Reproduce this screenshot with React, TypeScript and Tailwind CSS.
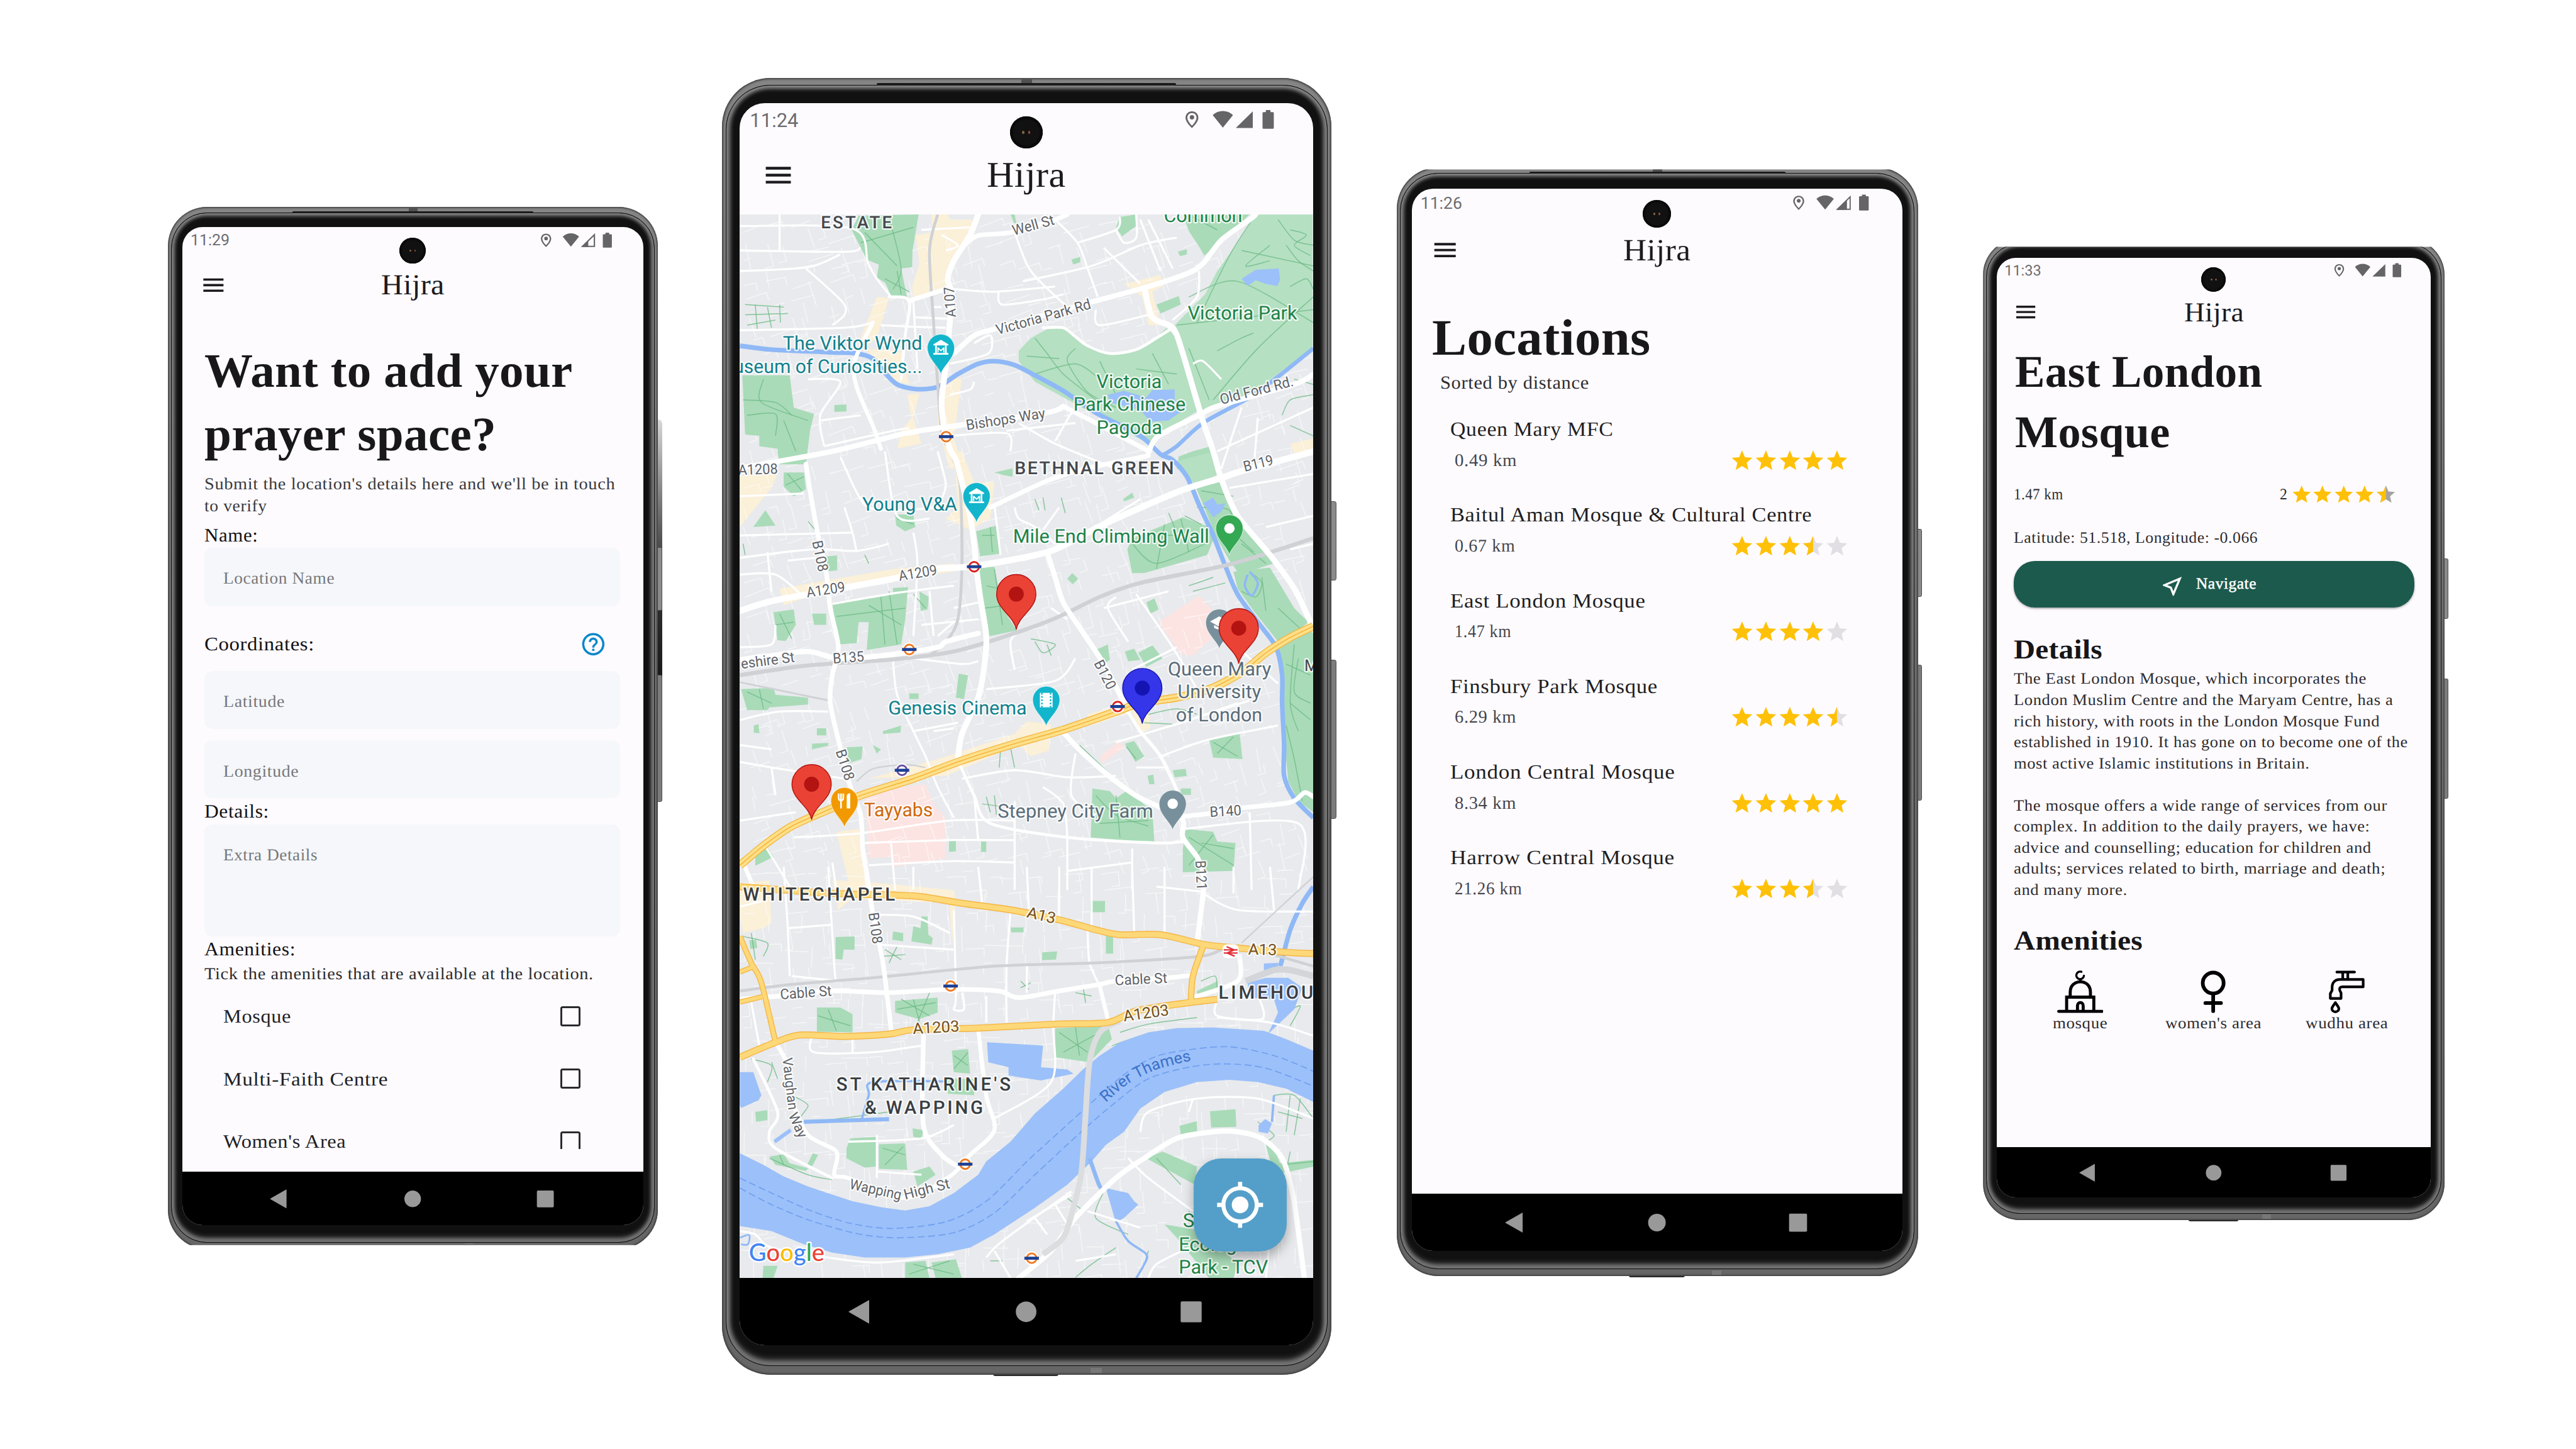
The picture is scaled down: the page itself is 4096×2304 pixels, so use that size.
import React from "react";
import { MdMenu, MdHelpOutline, MdMyLocation, MdOutlineNearMe } from "react-icons/md";

/* ---------- fitted serif text ---------- */

const ctx = document.createElement("canvas").getContext("2d")!;

function naturalWidth(text: string, size: number, bold: boolean) {
  ctx.font = `${bold ? "bold " : ""}1000px "Liberation Serif"`;
  return (ctx.measureText(text).width * size) / 1000;
}

/** A line of serif text whose letter width and tracking are computed so that it spans `w` pixels. */
function T({ children, s, w, bold = false, className = "" }: { children: string; s: number; w: number; bold?: boolean; className?: string }) {
  const gaps = Math.max(1, children.length - 1);
  const natural = naturalWidth(children, s, bold);
  const stretch = Math.min(1.16, Math.max(0.92, (w - (s > 20 ? 0.2 : 0.35) * gaps) / natural));
  const spacing = (w / stretch - natural) / gaps;
  return (
    <span
      className={`block origin-left whitespace-nowrap ${bold ? "font-bold" : ""} ${className}`}
      style={{ fontSize: s, letterSpacing: `${spacing.toFixed(3)}px`, width: w, transform: `scaleX(${stretch.toFixed(4)})` }}
    >
      {children}
    </span>
  );
}

/* ---------- phone shell ---------- */

type Signal = "full" | "most" | "low";

function StatusIcons({ signal }: { signal: Signal }) {
  return (
    <svg viewBox="318 0 70 24" className="h-[24px] w-[70px]" fill="#656568">
      <path fillRule="evenodd" d="M324.9 5.9c-2.7 0-4.6 2-4.6 4.6 0 3.3 4.6 7.4 4.6 7.4s4.6-4.1 4.6-7.4c0-2.6-1.9-4.6-4.6-4.6Zm0 1.2c1.9 0 3.3 1.4 3.3 3.3 0 2-2 4.5-3.3 5.8-1.3-1.3-3.3-3.8-3.3-5.8 0-1.9 1.4-3.3 3.3-3.3Z" />
      <circle cx="324.9" cy="10.2" r="1.6" />
      <path d="M347.1 17.6 339.8 8.6c4-3.9 10.6-3.9 14.6 0Z" />
      {signal === "full" && <path d="M356.4 17.8 368.6 5.9v11.9Z" />}
      {signal === "most" && (
        <>
          <path d="M357.4 17.3 368.1 6.9v10.4Z" fill="none" stroke="#656568" strokeWidth="1" />
          <path d="M357 17.8 365.4 9.4v8.4Z" />
        </>
      )}
      {signal === "low" && (
        <>
          <path d="M357.4 17.3 368.1 6.9v10.4Z" fill="none" stroke="#656568" strokeWidth="1.2" />
          <path d="M357 17.8 362.6 12v5.8Z" />
        </>
      )}
      <path d="M375.6 7.1q0-.7.7-.7h1.7V5h3.3v1.4h1.7q.7 0 .7.7v10.6q0 .7-.7.7h-6.7q-.7 0-.7-.7Z" />
    </svg>
  );
}

function Phone({ time, signal, children, worn = false }: { time: string; signal: Signal; children: React.ReactNode; worn?: boolean }) {
  return (
    <div className="relative w-[438px]">
      {worn && <div className="absolute top-[190px] left-[436px] h-[260px] w-[5.5px] rounded-r-[4px] bg-gradient-to-b from-[#d8d8d8] via-[#3b3b3b] to-[#111]" />}
      <div className="absolute top-[304px] left-[436px] h-[57px] w-[5.5px] rounded-r-[1.5px] border-[0.7px] border-[#4b4b4b] bg-[#8b8b8b]" />
      <div className="absolute top-[418px] left-[436px] h-[114px] w-[5.5px] rounded-r-[1.5px] border-[0.7px] border-[#4b4b4b] bg-[#7c7c7c]" />
      <div className="absolute bottom-[-1px] left-[195px] h-[3px] w-[47px] rounded-full bg-[#2b2b2b]" />
      <div className="relative rounded-[35px] bg-gradient-to-b from-[#858585] via-[#6a6a6a] to-[#666] px-[3px] pt-[5px] pb-[6px] shadow-[inset_0_0_1.4px_0.8px_#3a3a3a]">
        <div className="absolute top-[1px] left-[215px] h-[5px] w-[8px] bg-[#505050]" />
        <div className="absolute bottom-[1px] left-[265px] h-[4px] w-[8px] bg-[#777]" />
        <div className="relative rounded-[32px] border-[0.8px] border-[#0c0c0c] bg-[#111] px-[9.2px] pt-[12.7px] pb-[14.7px] shadow-[inset_0_-2.5px_5px_1px_#6f6f6f,inset_0_0_3.5px_1.8px_#a8a8a8]">
          <div className="absolute top-[-1.6px] left-[108px] h-[1.6px] w-[215px] rounded-full bg-[#1b1b1b]" />
          <div className="relative flex h-[892px] w-[412px] flex-col overflow-hidden rounded-[18px] bg-[#fefbff]">
            <div className="absolute top-[9.3px] left-[194.3px] flex h-[23.4px] w-[23.4px] items-center justify-center gap-[2.6px] rounded-full bg-[#111112] shadow-[inset_0_0_0_2px_#0a0a0a]">
              <div className="h-[2px] w-[1.6px] rounded-full bg-[#7c6a3d]" />
              <div className="h-[2px] w-[1.6px] rounded-full bg-[#94483a]" />
            </div>
            <div className="flex h-[24px] shrink-0 items-start justify-between pr-[24px] pl-[7.5px]">
              <span className="pt-[4.5px] font-['Roboto'] text-[14px] leading-[16px] text-[#6c6c70]">{time}</span>
              <StatusIcons signal={signal} />
            </div>
            <div className="grid h-[56px] shrink-0 grid-cols-[1fr_56.5px_1fr] items-center">
              <MdMenu className="mt-[-1px] ml-[16px] size-[24px] text-[#1b1b1f]" />
              <T s={26} w={56.5} className="leading-[30px] text-[#1b1b1f]">Hijra</T>
            </div>
            <div className="h-[764px] shrink-0">{children}</div>
            <div className="h-[48px] shrink-0 bg-black">
              <svg viewBox="0 0 412 48" className="h-[48px] w-[412px]" fill="#999">
                <path d="M78.6 24.3 92.8 16.2v16.2Z" stroke="#999" strokeWidth=".5" strokeLinejoin="round" />
                <circle cx="205.8" cy="24.3" r="7.4" />
                <rect x="316.8" y="16.8" width="15.1" height="15.1" rx="1" />
              </svg>
            </div>
          </div>
        </div>
      </div>
    </div>
  );
}

/* ---------- stars ---------- */

const STAR = "M12 17.27 18.18 21l-1.64-7.03L22 9.24l-7.19-.61L12 2 9.19 8.63 2 9.24l5.46 4.73L5.82 21z";

function Stars({ value, empty = "#e2dfe4" }: { value: number; empty?: string }) {
  return (
    <div className="flex">
      {[0, 1, 2, 3, 4].map((i) => (
        <svg key={i} viewBox="0.4 1.2 23.2 23.2" className="size-[20px] overflow-visible">
          <path d={STAR} fill={value >= i + 1 ? "#ffc107" : empty} transform="translate(0 .5)" />
          {value > i && value < i + 1 && (
            <path d="M12 17.27 5.82 21l1.64-7.03L2 9.24l7.19-.61L12 2z" fill="#ffc107" transform="translate(0 .5)" />
          )}
        </svg>
      ))}
    </div>
  );
}

/* ---------- screen: add a prayer space ---------- */

function Field({ label, w, className }: { label: string; w: number; className: string }) {
  return (
    <div className={`w-[371.5px] rounded-[7px] bg-[#f5f7fa] pt-[17.6px] pl-[16.8px] ${className}`}>
      <T s={15} w={w} className="leading-[20px] text-[#77777a]">{label}</T>
    </div>
  );
}

function AddSpace() {
  return (
    <div className="flex flex-col pl-[19.7px] text-[#121214]">
      <T s={43} w={329} bold className="mt-[19.7px] leading-[57px] text-[#18181a]">Want to add your</T>
      <T s={43} w={261.5} bold className="leading-[57px] text-[#18181a]">prayer space?</T>
      <T s={15} w={367} className="mt-[5.7px] leading-[20px] text-[#3a3a3e]">Submit the location's details here and we'll be in touch</T>
      <T s={15} w={55.7} className="leading-[20px] text-[#3a3a3e]">to verify</T>
      <T s={17} w={47.7} className="mt-[6px] leading-[20px]">Name:</T>
      <Field label="Location Name" w={99.3} className="mt-[1.1px] h-[52.2px]" />
      <div className="mt-[22.2px] flex h-[24px] w-[359.5px] items-center justify-between">
        <T s={17} w={98} className="leading-[24px]">Coordinates:</T>
        <MdHelpOutline className="size-[24px] text-[#0b87c9]" />
      </div>
      <Field label="Latitude" w={54.8} className="mt-[11.6px] h-[52px]" />
      <Field label="Longitude" w={67.3} className="mt-[10.2px] h-[51.7px]" />
      <T s={17} w={57.5} className="mt-[1.9px] leading-[20px]">Details:</T>
      <Field label="Extra Details" w={84.1} className="mt-[1.3px] h-[100.3px]" />
      <T s={17} w={81.2} className="mt-[1.7px] leading-[20px]">Amenities:</T>
      <T s={15} w={347.6} className="mt-[1.6px] h-[19.8px] leading-[20px] text-[#2b2b2e]">Tick the amenities that are available at the location.</T>
      <div className="h-[146.6px] overflow-hidden">
        {[
          { name: "Mosque", w: 60.4 },
          { name: "Multi-Faith Centre", w: 147 },
          { name: "Women's Area", w: 110.5 },
        ].map((a) => (
          <div key={a.name} className="flex h-[56px] w-[336.5px] items-center justify-between pl-[16.8px]">
            <T s={17} w={a.w} className="pt-[1px] leading-[24px] text-[#222226]">{a.name}</T>
            <div className="size-[18px] rounded-[2px] border-[1.7px] border-[#2a2a2e]" />
          </div>
        ))}
      </div>
    </div>
  );
}

/* ---------- screen: locations ---------- */

const LOCATIONS = [
  { name: "Queen Mary MFC", w: 136.7, km: "0.49 km", kw: 52.1, stars: 5 },
  { name: "Baitul Aman Mosque & Cultural Centre", w: 304.6, km: "0.67 km", kw: 50.6, stars: 3.5 },
  { name: "East London Mosque", w: 163.8, km: "1.47 km", kw: 47.4, stars: 4 },
  { name: "Finsbury Park Mosque", w: 174, km: "6.29 km", kw: 51.5, stars: 4.5 },
  { name: "London Central Mosque", w: 188.5, km: "8.34 km", kw: 51.5, stars: 5 },
  { name: "Harrow Central Mosque", w: 188.2, km: "21.26 km", kw: 56.4, stars: 3.5 },
];

function Locations() {
  return (
    <div className="flex flex-col">
      <T s={43} w={183.4} bold className="mt-[16.5px] ml-[17px] leading-[57px] text-[#18181a]">Locations</T>
      <T s={15.5} w={124.8} className="mt-[0.2px] ml-[24px] leading-[20px] text-[#2e2e31]">Sorted by distance</T>
      <div className="mt-[16.3px] flex flex-col gap-[23.7px] pl-[32.4px]">
        {LOCATIONS.map((l) => (
          <div key={l.name} className="flex h-[48.3px] flex-col justify-between">
            <T s={17} w={l.w} className="leading-[24px] text-[#1f1f23]">{l.name}</T>
            <div className="flex w-[335px] items-center justify-between pl-[3.6px]">
              <T s={15} w={l.kw} className="leading-[20px] text-[#45454a]">{l.km}</T>
              <Stars value={l.stars} />
            </div>
          </div>
        ))}
      </div>
    </div>
  );
}

/* ---------- screen: mosque details ---------- */

const PARAGRAPHS: { t: string; w: number }[][] = [
  [
    { t: "The East London Mosque, which incorporates the", w: 334.5 },
    { t: "London Muslim Centre and the Maryam Centre, has a", w: 359.8 },
    { t: "rich history, with roots in the London Mosque Fund", w: 347.2 },
    { t: "established in 1910. It has gone on to become one of the", w: 373.9 },
    { t: "most active Islamic institutions in Britain.", w: 280.5 },
  ],
  [
    { t: "The mosque offers a wide range of services from our", w: 354.2 },
    { t: "complex. In addition to the daily prayers, we have:", w: 337.8 },
    { t: "advice and counselling; education for children and", w: 339.2 },
    { t: "adults; services related to birth, marriage and death;", w: 352.7 },
    { t: "and many more.", w: 107.5 },
  ],
];

function MosqueIcon() {
  return (
    <svg viewBox="0 0 44 40.5" className="h-[40.5px] w-[44px]" fill="none" stroke="#000" strokeWidth="2.9" strokeLinecap="round">
      <path d="M1.5 38.9H42.5" />
      <path d="M9 38V25.4H34.8V38" strokeLinecap="butt" />
      <path d="M12.4 25V20.6C12.4 14.6 16.5 10.8 22 10.8s9.6 3.8 9.6 9.8V25" strokeLinecap="butt" />
      <path d="M19.3 38v-4.3c0-4.2 5.4-4.2 5.4 0V38" />
      <path d="M22 10V9" strokeWidth="2.4" />
      <path d="M23 1.3A3.6 3.6 0 1 0 25.4 5" strokeWidth="2" />
    </svg>
  );
}

function WomenIcon() {
  return (
    <svg viewBox="0 0 24 40.5" className="h-[40.5px] w-[24px]" fill="none" stroke="#000" strokeWidth="3.5" strokeLinecap="round">
      <circle cx="12" cy="12" r="9.9" />
      <path d="M12 22V38.6M4.6 31H19.4" />
    </svg>
  );
}

function FaucetIcon() {
  return (
    <svg viewBox="0 0 34 40.5" className="h-[40.5px] w-[34px]" fill="none" stroke="#000" strokeWidth="2.5" strokeLinejoin="round" strokeLinecap="round">
      <path d="M7.6 1.6H24.4M13.2 1.6v6.5M18 1.6v6.5" />
      <path d="M32.6 8.6H10.8C5.4 8.6 3 11.8 3.1 16.5v2.5L1.4 22v4.6H11.6v-5.2l-1.2-2.4c-.6-2 .2-3.4 2.2-3.4h20Z" />
      <path d="M6.2 30.6c-1.8 2.6-3.3 4.2-3.3 5.6a3.3 3.1 0 0 0 6.6 0c0-1.4-1.5-3-3.3-5.6Z" />
    </svg>
  );
}

function MosqueDetails() {
  return (
    <div className="flex flex-col pl-[16.2px] text-[#2c2c2f]">
      <T s={43} w={234.7} bold className="mt-[-0.6px] ml-[1.4px] leading-[57.5px] text-[#18181a]">East London</T>
      <T s={43} w={147} bold className="ml-[1.4px] leading-[57.5px] text-[#18181a]">Mosque</T>
      <div className="mt-[20.8px] flex h-[20px] w-[363px] items-center justify-between">
        <T s={15} w={46.7} className="leading-[20px]">1.47 km</T>
        <div className="flex items-center gap-[3px]">
          <T s={15} w={7.4} className="leading-[20px]">2</T>
          <Stars value={4.5} empty="#a3a3a3" />
        </div>
      </div>
      <T s={15} w={231.4} className="mt-[21.2px] leading-[20px]">Latitude: 51.518, Longitude: -0.066</T>
      <div className="mt-[11.6px] flex h-[44.2px] w-[380px] items-center rounded-[20px] bg-[#1c5a4d] pl-[138.5px] shadow-[0_1px_2px_rgba(0,0,0,0.35)]">
        <MdOutlineNearMe className="mt-[3px] size-[24px] text-white" />
        <T s={15} w={57} className="ml-[10.5px] leading-[20px] text-white [-webkit-text-stroke:0.3px_white]">Navigate</T>
      </div>
      <T s={26} w={84} bold className="mt-[26.2px] leading-[28px] text-[#161618]">Details</T>
      <div className="mt-[3.8px] flex flex-col gap-[20px]">
        {PARAGRAPHS.map((p, i) => (
          <div key={i}>
            {p.map((l) => (
              <T key={l.t} s={15} w={l.w} className="leading-[20.04px]">{l.t}</T>
            ))}
          </div>
        ))}
      </div>
      <T s={26} w={122.2} bold className="mt-[24.1px] leading-[28px] text-[#161618]">Amenities</T>
      <div className="mt-[13.6px] grid w-[380px] grid-cols-[126px_127px_126px]">
        <div className="flex flex-col items-center">
          <MosqueIcon />
          <T s={15} w={51.7} className="leading-[20px]">mosque</T>
        </div>
        <div className="flex flex-col items-center">
          <WomenIcon />
          <T s={15} w={91} className="leading-[20px]">women's area</T>
        </div>
        <div className="flex flex-col items-center">
          <FaucetIcon />
          <T s={15} w={78.1} className="leading-[20px]">wudhu area</T>
        </div>
      </div>
    </div>
  );
}

/* ---------- screen: map ---------- */

type Pt = [number, number];
const KX = 0.70153;

const sheet = (ky: number, y0: number) => (s: string): Pt[] =>
  s.trim().split(/\s+/).map((p) => {
    const [x, y] = p.split(",").map(Number);
    return [1230 + x * KX, y0 + y * ky] as Pt;
  });
const N = sheet(0.44643, 110);
const M = sheet(0.48469, 780);
const S = sheet(0.57398, 1500);

const poly = (p: Pt[]) => "M" + p.map(([x, y]) => `${x.toFixed(1)} ${y.toFixed(1)}`).join("L") + "Z";

function line(p: Pt[]) {
  let d = `M${p[0][0].toFixed(1)} ${p[0][1].toFixed(1)}`;
  for (let i = 0; i < p.length - 1; i++) {
    const a = p[i - 1] ?? p[i];
    const b = p[i];
    const c = p[i + 1];
    const e = p[i + 2] ?? c;
    const k = 7;
    d += `C${(b[0] + (c[0] - a[0]) / k).toFixed(1)} ${(b[1] + (c[1] - a[1]) / k).toFixed(1)} ${(c[0] - (e[0] - b[0]) / k).toFixed(1)} ${(c[1] - (e[1] - b[1]) / k).toFixed(1)} ${c[0].toFixed(1)} ${c[1].toFixed(1)}`;
  }
  return d;
}

const bundle = (n: string[], m: string[], s: string[]) => [...n.map(N), ...m.map(M), ...s.map(S)];

const PARKS = bundle(
  [
    "348,640 365,585 513,580 498,720 497,785 470,790 485,905 445,895 430,845 410,825 415,775 385,755",
    "1165,580 1330,580 1290,640 1218,740 1205,705 1180,645",
    "1010,590 1050,580 1050,625 1015,665 1000,630",
    "78,1205 195,1205 205,1330 255,1355 245,1420 235,1550 170,1550 165,1490 120,1480 120,1440 85,1435",
    "1190,1500 1235,1480 1245,1568 1150,1568 1155,1520",
    "305,1320 335,1318 335,1345 305,1347",
    "890,755 912,745 912,765 895,775",
    "1153,725 1175,715 1175,735 1158,742",
    "1100,930 1155,897 1160,930 1110,965",
    "740,580 750,580 755,618 748,612",
  ],
  [
    "165,0 232,0 222,30 170,45", "180,75 230,75 235,135 205,160 180,125", "135,210 160,265 105,270",
    "455,225 500,225 505,270 480,285 458,265", "655,285 705,265 715,365 665,375", "662,415 700,412 720,560 755,640 683,662",
    "300,545 450,510 450,488 487,485 480,600 470,690 385,710 390,610 365,610 360,685 315,690",
    "155,575 205,565 210,620 185,678 165,675", "250,580 285,580 285,620 255,620", "515,500 538,520 535,565 518,570",
    "285,375 312,372 312,425 290,428", "700,75 745,60 745,90 725,85", "1018,170 1040,147 1045,165 1020,178",
    "1195,120 1260,98 1300,250 1385,380 1390,400 1305,440 1280,390 1245,300 1215,190",
    "1290,430 1380,415 1440,560 1475,610 1440,650 1400,680 1340,570 1300,490",
    "1395,690 1440,650 1475,640 1487,650 1487,1290 1450,1250 1425,1180 1420,1100 1415,900 1410,760",
    "1040,310 1165,235 1250,280 1225,370 1070,435 1040,435 1028,350", "880,455 892,435 907,455 893,475",
    "1075,540 1095,525 1105,565 1085,580", "950,710 980,690 985,745 965,765", "1055,720 1090,693 1115,740 1075,770",
    "1022,715 1045,705 1060,745 1030,750", "75,850 155,845 160,870 240,880 240,905 145,915 140,925 90,925",
    "490,865 513,865 513,885 490,885", "425,1000 470,980 468,1005 425,1010", "400,1050 420,1065 410,1080",
    "335,1058 375,1055 372,1100 340,1115", "612,795 635,800 625,885 605,880", "1230,1030 1305,1005 1312,1100 1240,1095",
    "1140,1140 1172,1135 1175,1160 1145,1165", "1022,1045 1045,1035 1070,1090 1048,1110", "1078,1160 1092,1155 1095,1190 1082,1190",
    "262,990 285,990 285,1015 262,1015", "250,1045 290,1042 290,1052 250,1065", "106,980 118,975 120,1008 106,1005",
    "942,1205 985,1215 1000,1240 1030,1210 1090,1290 1095,1400 980,1385 938,1380",
    "1170,1350 1240,1360 1250,1395 1295,1400 1290,1500 1165,1505 1165,1420 1170,1380", "1160,1205 1185,1205 1185,1228 1160,1228",
    "588,1390 605,1390 605,1430 588,1432", "667,1395 680,1395 680,1432 667,1432", "110,1440 140,1415 155,1450 110,1482",
  ],
  [
    "1180,0 1290,0 1290,10 1165,15", "520,150 535,150 537,205 548,215 545,235 495,225 500,180 518,185", "450,195 475,200 475,225 448,220",
    "308,212 355,210 355,250 328,250 325,280 308,278", "818,258 855,255 852,280 818,282", "740,183 772,183 772,198 742,198",
    "975,207 993,207 993,262 975,262", "937,103 973,103 973,137 937,137", "262,425 320,425 350,445 350,500 262,498",
    "455,405 560,395 560,440 515,460 455,440", "850,488 945,480 980,475 990,520 935,590 850,575", "595,555 635,550 640,625 600,620",
    "585,640 650,640 650,690 585,685", "335,850 345,820 412,815 410,905 380,908 335,880", "415,838 480,835 485,915 415,912",
    "498,790 525,795 520,820 500,815", "500,920 540,905 555,930 510,965", "238,900 252,865 265,870 250,905",
    "1232,738 1295,732 1297,785 1235,787", "1157,782 1200,768 1200,800 1160,808", "1075,880 1115,860 1200,905 1195,960",
    "130,1205 165,1205 155,1242 128,1242", "480,1195 530,1190 540,1242 480,1242", "545,1195 605,1185 620,1242 555,1242",
    "1370,840 1390,850 1405,895 1487,885 1487,905 1390,930", "1120,1080 1220,1100 1300,1200 1290,1242 1230,1242 1150,1120",
    "145,875 180,868 195,895 240,910 235,918 160,900", "1200,375 1250,345 1250,375 1200,390", "110,740 140,735 140,765 112,770", "95,222 112,220 115,245 98,248",
  ],
);

const VICTORIA = bundle(
  [
    "1345,580 1485,580 1485,1100 1330,1280 1215,1345 1160,1060 1145,1010 1220,890 1250,800 1300,690",
    "760,1110 790,1060 830,1025 870,1022 900,1060 930,1085 985,1120 1050,1110 1090,1070 1125,1020 1150,1060 1205,1340 1100,1440 1080,1470 870,1290 800,1230 760,1150",
  ],
  ["1150,35 1240,0 1255,80 1195,120"],
  [],
);

const COMMERCE = bundle(
  [
    "505,660 545,650 545,580 585,580 590,600 650,600 645,660 600,760 590,830 575,880 500,905 497,860 515,770",
    "410,900 440,905 410,1060 375,1100 370,1060 395,960",
    "380,1100 470,1110 490,1240 440,1220 400,1130",
    "560,1225 620,1215 600,1450 625,1568 590,1568 560,1400",
    "485,1280 515,1275 500,1370 520,1470 460,1490 470,1420 495,1370",
    "1020,850 1110,815 1115,860 1090,880 1110,1010 1080,1010 1065,900",
    "1430,1470 1487,1450 1487,1500 1440,1510",
  ],
  [
    "72,85 165,80 150,130 72,270", "600,0 620,0 650,110 700,110 690,240 640,280 580,240 610,200",
    "170,490 450,420 600,400 600,430 300,490 180,550", "390,1170 560,1100 750,1010 780,965 840,975 835,1070 790,1090 760,1050 580,1160",
    "310,1360 365,1350 390,1568 345,1568", "930,940 1080,880 1085,990 1060,1010 1040,930 940,980",
  ],
  ["72,50 145,40 150,170 130,185 80,200 72,150", "300,40 380,45 600,70 605,100 595,240 590,110 350,95 315,130"],
);

const HOSPITAL = bundle(
  [],
  [
    "1105,610 1205,515 1265,610 1250,650 1190,730 1160,725",
    "380,1215 530,1190 550,1260 580,1310 580,1455 450,1485 450,1450 390,1455",
    "1010,1035 1020,1060 965,1115 960,1090",
  ],
  [],
);

const WATER = bundle(
  [
    "980,1280 1020,1265 1075,1290 1090,1262 1145,1260 1145,1300 1175,1330 1130,1380 1085,1385 1060,1340 985,1310",
    "1310,830 1345,795 1402,790 1405,835 1398,858 1370,850 1345,835 1325,858",
  ],
  ["1215,185 1240,165 1250,190 1270,185 1260,215 1240,235"],
  [
    "72,865 130,900 180,935 240,965 300,990 350,1010 420,1028 480,1038 540,1025 600,985 660,930 680,890 740,830 800,745 870,670 920,610 960,570 1010,530 1080,500 1150,487 1240,485 1300,490 1365,495 1420,520 1487,555 1487,710 1420,670 1350,650 1280,643 1200,650 1120,680 1060,730 1020,800 975,840 940,890 880,960 800,1030 700,1110 640,1150 560,1170 480,1180 380,1180 300,1165 230,1140 150,1100 72,1085",
    "72,620 105,620 125,690 118,705 75,728 72,720",
    "682,530 820,540 815,605 880,612 895,625 815,645 760,635 735,630 735,605 685,590",
    "155,825 195,790 200,800 160,835",
    "975,970 1030,985 1045,1010 1055,1020 1020,1060 1000,1075",
    "1325,350 1370,335 1425,335 1460,365 1440,430 1375,505 1400,440 1390,400 1330,395",
    "1365,292 1400,290 1400,312 1365,315", "1352,780 1368,762 1385,775 1375,805 1352,800",
  ],
);

const CANALS: { p: Pt[]; w: number }[] = [
  {
    p: [
      ...N("72,1090 150,1105 290,1115 360,1120 400,1140 430,1195 460,1240 505,1258 560,1250 610,1200 660,1160 700,1150 750,1165 800,1205 870,1265 950,1350 1060,1440"),
      ...M("1110,10 1140,30 1175,90 1205,190 1240,300 1270,410 1300,510 1350,610 1395,700 1410,800 1410,900 1415,1050 1415,1160 1440,1240 1487,1310"),
    ],
    w: 8,
  },
  { p: N("1487,1100 1400,1210 1330,1290 1215,1390 1150,1480 1110,1520"), w: 7 },
  { p: M("1330,430 1350,470 1335,515 1318,480 1325,440"), w: 4 },
  { p: S("1487,60 1460,110 1430,190 1410,280 1405,300"), w: 8 },
  { p: S("230,770 440,762"), w: 7 },
  { p: S("372,765 390,690 400,650 580,648"), w: 4 },
  { p: S("935,880 960,965 975,975"), w: 7 },
  { p: S("1000,1070 1030,1130 1075,1170 1070,1200 1050,1242"), w: 4 },
  { p: S("1390,690 1385,770"), w: 4 },
  { p: S("72,1120 95,1112 92,1140 75,1140"), w: 3 },
];

const RAIL: { p: Pt[]; w: number }[] = [
  { p: M("72,800 240,765 440,745 600,715 750,650 860,590 960,520 1060,470 1290,400 1487,310"), w: 7 },
  { p: [...N("560,580 540,720 550,1000 565,1350 572,1450"), ...M("592,0 615,120 620,400 610,600 580,680 540,730")], w: 5 },
  { p: S("72,375 200,355 400,335 700,300 950,290 1210,270 1300,240 1487,300"), w: 5 },
  { p: S("1310,230 1487,30"), w: 2.5 },
  { p: M("72,825 290,890"), w: 3 },
  { p: M("360,1180 400,1135 480,1120 530,1130"), w: 2.5 },
];

const MAJOR: { p: Pt[]; w: number }[] = [
  {
    p: [
      ...N("660,580 640,660 600,760 585,830 595,890 590,1000 580,1170 570,1300 575,1400 590,1490"),
      ...M("605,30 620,110 640,230 650,330 655,410 665,520 680,660 675,770 660,880 620,1010 610,1100"),
    ],
    w: 10,
  },
  { p: N("625,700 660,662 740,650 850,600 880,580"), w: 8 },
  { p: N("600,1120 650,1050 700,1025 940,920 1070,865 1175,810 1215,770 1260,680 1330,600 1345,580"), w: 9 },
  { p: [...N("1070,865 1090,980 1140,1020 1165,1120 1210,1360 1240,1500"), ...M("1260,98 1300,230 1380,370 1440,490 1480,610")], w: 10 },
  { p: N("820,1020 870,1020 900,1055 930,1090 985,1120 1050,1105 1100,1060 1140,1020"), w: 5 },
  { p: N("1487,1200 1440,1240 1250,1325 1205,1360 1105,1440 1080,1505"), w: 9 },
  { p: N("870,1325 950,1390 1075,1495"), w: 8 },
  { p: N("72,1565 300,1500 480,1430 560,1410 630,1395 830,1350 870,1325"), w: 9 },
  { p: N("490,915 580,870"), w: 8 },
  { p: N("440,900 490,915 480,1050 470,1220"), w: 5 },
  { p: N("400,1000 355,1150 360,1250 400,1400 420,1490"), w: 7 },
  { p: M("690,200 830,105 930,60 1080,15"), w: 8 },
  { p: M("72,570 150,535 300,495 450,455 550,420 650,410 830,360 930,290 1000,240 1160,140 1260,95 1310,70 1487,0"), w: 11 },
  { p: [...M("235,45 245,140 265,300 285,430 295,560 315,700 300,800 295,900 320,1060 345,1200 370,1300 375,1420"), ...S("385,20 400,140 425,290 445,490")], w: 8 },
  { p: M("830,360 850,450 870,540 920,650 970,760 1010,870 1030,930"), w: 9 },
  { p: M("1030,930 1060,1000 1110,1090 1150,1210"), w: 6 },
  { p: M("72,745 150,730 240,715 320,740 450,725 560,700 580,680 660,650"), w: 9 },
  { p: [...M("870,1005 920,1080 1000,1180 1060,1240 1160,1310 1165,1380 1200,1450"), ...S("1215,20 1215,80 1200,230")], w: 9 },
  { p: M("1165,1305 1230,1295 1310,1275 1430,1255 1465,1220 1487,1235"), w: 8 },
  { p: M("615,1120 650,1230 690,1330 880,1380 1100,1400 1165,1395"), w: 5 },
  { p: S("72,400 170,390 300,375 440,380 590,370 710,375 760,395 860,375 960,355 1000,345 1130,335 1180,328"), w: 8 },
  { p: S("165,540 190,600 200,700 240,810 310,860 305,930 340,940 480,1000 590,935 640,870 700,795 680,690 660,490"), w: 7 },
  { p: S("525,510 525,780 570,870 610,905"), w: 8 },
  { p: S("105,580 165,740 145,800 160,850 300,940"), w: 5 },
  { p: S("760,1242 840,1160 900,1060 1000,940 1070,880 1150,820 1240,800 1300,800 1360,820 1410,880 1435,980 1450,1100 1465,1242"), w: 9 },
  { p: S("960,360 980,460"), w: 7 },
  { p: S("1305,270 1300,345 1190,395"), w: 8 },
  { p: [...M("80,1470 110,1568"), ...S("125,70")], w: 7 },
];

const MINOR = bundle(
  [
    "72,625 350,635 388,770 410,830 445,900", "72,720 330,725 370,710", "72,800 240,785 320,735", "235,790 325,920 330,970 300,1010",
    "72,1030 330,1020 400,1000", "750,650 790,800 880,940", "850,600 905,690 930,790 955,900", "905,690 1000,640 1010,590",
    "770,840 940,780 1060,700 1150,670", "970,710 1060,850", "1060,600 1110,800", "600,870 700,880 850,860", "1080,600 1140,790",
    "1050,580 1050,670 1020,690 1000,640", "710,880 720,930 820,910 870,890", "505,980 590,985", "420,1010 480,1015 580,1020",
    "650,1080 690,1050 685,1120 590,1160", "240,1220 320,1230 270,1360 280,1480", "270,1380 370,1360", "280,1480 450,1420 490,1410",
    "1205,800 1200,900 1140,990", "950,950 960,1010 1080,970", "850,1460 890,1350", "760,1390 850,1470 1000,1568", "1190,1160 1215,1150 1260,1220",
    "1350,1370 1340,1568", "1310,1330 1260,1568", "1250,1500 1487,1330", "170,580 170,720", "570,660 610,700 580,720", "520,640 640,630",
    "590,1280 640,1260 650,1230", "590,1440 730,1430 740,1500", "730,1420 900,1390", "500,920 510,1180", "545,940 570,940",
  ],
  [
    "72,160 230,150", "320,20 380,190 460,210 560,200", "430,0 460,230 540,240", "72,380 250,350 360,355 440,330", "72,300 350,290",
    "500,290 510,400 500,660", "700,190 715,370", "750,200 760,240 800,270 850,330", "560,0 580,120 560,200", "860,200 820,280",
    "1060,170 960,260", "1000,520 980,560 1030,680", "1050,510 1140,700 1200,850", "870,580 770,640 740,680 750,780",
    "450,750 460,870 500,1000 530,1090 560,1200 600,1310", "72,960 170,930 290,930", "72,1050 150,1065", "680,850 850,820 900,740",
    "500,740 620,760 660,750", "550,1000 600,990", "620,1170 750,1140 880,1165 1000,1160", "750,1250 750,1568", "650,1230 660,1390",
    "72,1110 150,1130 330,1170", "150,1130 160,1230", "72,1320 210,1290", "130,1400 200,1568", "205,1380 370,1365 590,1320 750,1320",
    "445,1400 455,1568", "380,1400 590,1390 750,1390", "390,1480 590,1465 750,1470", "300,1470 310,1568", "1000,1040 1160,970 1300,900",
    "1110,1090 1230,1030 1400,980", "1330,1290 1335,1568", "1165,1350 1450,1330 1450,1568", "880,1380 880,1568", "1040,1420 1040,1568",
    "880,1500 1040,1470", "1050,1130 1130,1130", "1300,700 1400,830", "1140,980 1330,890", "300,545 460,505 600,480", "540,500 550,660",
    "1040,780 1150,700", "880,600 840,560", "500,1000 610,970", "72,700 150,690 160,620", "230,520 160,440 72,440", "970,560 1130,500",
    "1487,330 1430,350", "1370,270 1487,230", "1280,130 1487,80", "820,1200 870,1260 880,1380", "900,1080 890,1230 950,1300",
    "600,560 660,540", "520,620 660,600", "560,660 600,610", "140,360 150,500", "190,390 260,380", "330,200 350,290 360,360",
  ],
  [
    "180,0 190,180 195,330", "190,185 300,175", "290,0 305,300 310,350", "72,120 140,100", "400,145 500,150 590,200", "420,235 600,250",
    "600,130 605,390 600,430 625,430 620,380", "740,130 730,300 730,470", "860,0 860,150", "930,190 935,290 960,360", "1040,0 1045,200",
    "1215,80 1300,130 1487,135", "1290,0 1290,80", "250,510 255,560 400,560 520,540", "850,380 845,480 840,650 700,760",
    "1250,400 1250,450 1360,460 1355,400", "1250,455 1380,470 1487,510", "1060,800 1080,740 1200,700 1350,700 1487,760",
    "1030,880 1080,940 1190,1040", "780,1070 890,990", "850,1020 880,1080", "680,1180 720,1130 890,980", "700,1160 740,1242", "900,1190 1000,1170",
    "930,1040 1060,1090", "1080,1242 1100,1200 1180,1150", "72,1100 110,1110 150,1150 290,1180 420,1195 600,1170", "410,810 410,940",
    "520,930 410,920", "340,830 520,820 600,780", "200,330 320,345", "500,0 500,70", "660,0 670,110", "780,0 785,130", "940,0 940,190",
    "1120,0 1120,200", "1380,0 1390,130", "680,390 680,470", "780,300 780,380", "350,510 350,560", "100,410 120,540", "1100,60 1215,75",
    "800,1060 830,1110", "1340,960 1380,1060 1370,1242", "1190,700 1180,740",
  ],
);

const PARK_PATHS = bundle(
  [
    "800,1060 830,1120 870,1200 950,1300", "900,1100 880,1150 930,1270 1000,1330", "1180,900 1300,840 1487,1000", "1150,1010 1487,950",
    "1345,580 1280,740 1200,1000", "1240,1300 1350,1100 1487,900", "1310,720 1487,780", "380,650 460,780", "440,590 470,790 450,870",
    "370,690 500,630", "430,830 490,880", "460,800 470,890", "85,930 180,940", "85,970 190,965", "90,1010 160,990", "110,930 115,1030",
    "140,940 150,1020", "170,930 172,1000", "80,1300 160,1310 200,1360", "130,1220 125,1310 240,1380", "90,1360 160,1355 160,1440",
    "180,1380 210,1500", "960,1150 1000,1280", "1050,1180 1150,1200", "800,1200 900,1160 960,1220", "1090,1120 1130,1240", "780,1130 860,1140",
    "1430,640 1470,660 1440,700 1480,740", "1420,700 1450,760 1487,800", "1400,600 1440,680 1487,700", "1430,860 1470,830 1487,870",
    "1250,1110 1310,1060 1340,1040", "1180,1100 1230,1300", "1380,700 1320,780 1380,760", "1190,590 1250,640", "1440,1220 1487,1240", "1410,1360 1430,1300 1487,1280", "1430,1400 1487,1440",
  ],
  [
    "190,80 225,140", "185,120 230,90", "460,240 500,260", "670,300 700,300", "690,270 695,360", "310,590 480,560", "420,520 430,690", "390,550 470,620",
    "440,500 460,690", "170,580 200,670", "160,620 205,610", "1040,330 1100,400 1220,330", "1120,260 1100,420", "1060,300 1200,300", "1160,240 1180,360",
    "1130,220 1150,290", "1170,230 1210,260", "1210,140 1290,160", "1200,200 1280,210 1290,310", "1260,250 1340,360", "1310,330 1370,400", "1330,430 1360,470 1345,520 1310,500",
    "1360,450 1370,570", "1400,560 1460,640", "1440,690 1430,900 1450,1000", "1420,760 1480,800", "1450,740 1440,860 1480,900", "1420,980 1440,1100 1460,1250",
    "1430,900 1480,960", "680,480 740,500", "675,560 730,550", "700,420 720,620", "790,670 850,690 820,720 800,680", "830,690 840,730", "500,510 530,560",
    "90,860 150,900", "120,850 130,920", "1180,480 1240,450", "1190,500 1270,470", "1080,940 1150,920 1200,940", "1070,970 1140,975", "950,1230 1000,1300 1080,1340",
    "960,1330 1080,1320", "1000,1230 1010,1380", "1180,1380 1290,1480", "1180,1480 1240,1370", "1210,1400 1290,1420", "1240,1040 1300,1090", "1250,1080 1290,1020",
    "800,170 810,210", "820,165 825,210", "865,165 875,220", "680,1235 690,1290", "700,1230 705,1300", "670,1260 720,1270", "910,1050 990,1160", "1025,1055 1050,1100",
    "650,1080 770,1040", "740,1060 750,1130", "715,1070 712,1130", "380,370 390,400", "240,250 270,300", "80,330 85,370",
  ],
  [
    "265,450 345,480", "290,430 310,495", "470,400 540,450", "460,430 555,410", "500,400 520,490", "540,380 500,500", "860,500 930,560", "870,560 960,500", "900,485 910,570",
    "1010,500 1080,475 1200,455", "990,540 1060,510", "600,570 635,600", "600,610 635,560", "430,250 470,280", "440,290 460,240", "425,270 480,265",
    "765,345 785,370", "765,365 790,350", "880,1000 920,1040", "200,690 240,720 230,770 440,740", "100,580 150,600 140,650", "150,590 165,640", "145,880 240,930 300,945",
    "170,870 180,900", "425,850 480,870", "430,900 475,845", "970,980 950,1060 1030,1110", "1080,1160 1070,1200", "1000,1150 940,1200 900,1240", "1390,690 1440,690 1487,760",
    "1400,740 1460,760", "1430,690 1420,800", "1455,700 1440,810", "1350,770 1390,810 1370,830", "690,1190 720,1190", "500,1200 600,1230", "490,1230 590,1190", "1100,880 1160,960",
    "1410,900 1487,890", "1420,920 1430,860", "1180,1040 1190,1060", "1210,345 1245,330 1250,370", "1420,440 1455,420 1430,480", "900,380 940,390", "920,370 925,410", "80,210 140,230 130,270", "100,200 110,280",
  ],
);

/* Footways and mews: a repeatable scatter of short, street-aligned segments. */
const MEWS = (() => {
  let seed = 11;
  const rnd = () => ((seed = (seed * 16807) % 2147483647) / 2147483647);
  let d = "";
  for (let y = 385; y < 2215; y += 32) {
    for (let x = 1285; x < 2275; x += 34) {
      const a = -0.28 + (y > 1480 ? 0.22 : 0) + (rnd() - 0.5) * 0.22 + (rnd() > 0.5 ? Math.PI / 2 : 0);
      const l = 14 + rnd() * 34;
      const px = x + rnd() * 20;
      const py = y + rnd() * 18;
      const ex = px + Math.cos(a) * l;
      const ey = py + Math.sin(a) * l;
      d += `M${px.toFixed(1)} ${py.toFixed(1)}L${ex.toFixed(1)} ${ey.toFixed(1)}`;
      if (rnd() > 0.5) d += `l${(-Math.sin(a) * 14).toFixed(1)} ${(Math.cos(a) * 14).toFixed(1)}`;
    }
  }
  return d;
})();

const HIGHWAYS: { p: Pt[]; w: number }[] = [
  { p: S("72,210 100,290 125,350 160,530"), w: 7 },
  { p: S("72,318 108,300"), w: 6 },
  { p: S("72,408 128,392"), w: 6 },
  { p: S("1215,240 1190,330 1185,405"), w: 8 },
  { p: S("72,60 300,80 450,85 520,90 620,110 740,130 860,160 950,190 1010,205 1110,205 1220,235 1300,245 1420,258 1487,262"), w: 9 },
  { p: S("72,575 160,530 220,508 330,512 440,505 500,492 660,487 850,475 980,470 1050,435 1180,410 1250,400"), w: 9 },
];
const A11 = M("72,1480 130,1410 200,1340 300,1275 370,1230 500,1170 620,1105 750,1045 870,995 1000,930 1060,900 1150,880 1230,850 1310,790 1370,720 1430,665 1487,625");

const GREEN = "#1d8348";
const TEAL = "#11818d";
const SLATE = "#5a6c79";
const ROAD = "#5f6368";
const TOWN = "#44484d";
const BROWN = "#75501b";

type Label = { t: string; p: Pt[]; s: number; c: string; town?: boolean };
const L = (t: string, p: Pt[], s: number, c: string, town = false): Label => ({ t, p, s, c, town });

const LABELS: Label[] = [
  L("ESTATE", N("272,635 447,635"), 30, TOWN, true),
  L("Common", N("1118,610 1312,610"), 33, GREEN),
  L("Well St", N("748,662 850,618"), 25, ROAD),
  L("A107", N("605,978 600,860"), 25, ROAD),
  L("Victoria Park Rd", N("708,1048 940,945"), 25, ROAD),
  L("Victoria Park", N("1177,987 1447,987"), 33, GREEN),
  L("The Viktor Wynd", N("178,1106 522,1106"), 33, TEAL),
  L("useum of Curiosities...", N("56,1195 522,1195"), 33, TEAL),
  L("Victoria", N("952,1255 1113,1255"), 33, GREEN),
  L("Park Chinese", N("895,1343 1172,1343"), 33, GREEN),
  L("Pagoda", N("952,1432 1114,1432"), 33, GREEN),
  L("Old Ford Rd.", N("1260,1318 1440,1245"), 25, ROAD),
  L("Bishops Way", N("632,1418 827,1370"), 25, ROAD),
  L("B119", M("1318,72 1390,46"), 25, ROAD),
  L("BETHNAL GREEN", M("750,82 1143,82"), 31, TOWN, true),
  L("A1208", M("68,84 166,79"), 25, ROAD),
  L("Young V&A", M("374,212 608,212"), 33, TEAL),
  L("Mile End Climbing Wall", M("746,327 1230,327"), 33, GREEN),
  L("B108", M("250,322 266,432"), 25, ROAD),
  L("A1209", M("466,463 560,440"), 25, ROAD),
  L("A1209", M("238,522 333,501"), 25, ROAD),
  L("B135", M("302,758 379,750"), 25, ROAD),
  L("eshire St", M("76,777 208,752"), 25, ROAD),
  L("B120", M("945,757 980,855"), 25, ROAD),
  L("B108", M("308,1072 332,1180"), 25, ROAD),
  L("Queen Mary", M("1128,800 1383,800"), 33, SLATE),
  L("University", M("1152,882 1358,882"), 33, SLATE),
  L("of London", M("1148,965 1361,965"), 33, SLATE),
  L("M", M("1465,785 1499,785"), 28, TOWN),
  L("Genesis Cinema", M("438,940 780,940"), 33, TEAL),
  L("Tayyabs", M("378,1305 548,1305"), 33, "#d0690c"),
  L("Stepney City Farm", M("708,1310 1092,1310"), 33, SLATE),
  L("B140", M("1232,1307 1310,1300"), 25, ROAD),
  L("B121", [...M("1196,1464"), ...S("1200,70")], 25, ROAD),
  L("WHITECHAPEL", S("80,102 455,102"), 32, "#3a3e42", true),
  L("A13", S("778,152 848,172"), 27, BROWN),
  L("A13", S("1326,265 1397,267"), 27, BROWN),
  L("B108", S("389,140 400,234"), 25, ROAD),
  L("Cable St", S("172,400 299,389"), 25, ROAD),
  L("Cable St", S("998,358 1127,350"), 25, ROAD),
  L("A1203", S("499,505 614,497"), 27, BROWN),
  L("A1203", S("1020,467 1132,448"), 27, BROWN),
  L("ST KATHARINE'S", S("310,676 740,676"), 32, "#3a3e42", true),
  L("& WAPPING", S("380,745 672,745"), 32, "#3a3e42", true),
  L("Vaughan", S("177,578 192,735"), 24, ROAD),
  L("Way", S("191,750 218,822"), 24, ROAD),
  L("Wapping", S("341,972 468,1006"), 25, ROAD),
  L("High St", S("480,1005 592,970"), 25, ROAD),
  L("LIMEHOU", S("1253,398 1487,398"), 32, "#3a3e42", true),
  L("Stave Hill", S("1165,1088 1365,1088"), 33, GREEN),
  L("Ecological", S("1155,1160 1372,1160"), 33, GREEN),
  L("Park - TCV", S("1155,1228 1375,1228"), 33, GREEN),
];

function MapLabel({ l }: { l: Label }) {
  const [[x1, y1], [x2, y2]] = l.p;
  const len = Math.hypot(x2 - x1, y2 - y1);
  const deg = (Math.atan2(y2 - y1, x2 - x1) * 180) / Math.PI;
  return (
    <text
      transform={`translate(${x1.toFixed(1)} ${y1.toFixed(1)}) rotate(${deg.toFixed(2)})`}
      fontSize={l.s}
      fill={l.c}
      textLength={len}
      lengthAdjust={l.town ? "spacing" : "spacingAndGlyphs"}
      stroke="#fff"
      strokeWidth="5"
      strokeLinejoin="round"
      strokeOpacity=".8"
      paintOrder="stroke"
      fontWeight={l.town ? 500 : 400}
    >
      {l.t}
    </text>
  );
}

const DROP = "M0 46C-2 33-23.5 20-23.5 0A23.5 23.5 0 1 1 23.5 0C23.5 20 2 33 0 46Z";

function Poi({ at, color, children }: { at: Pt[]; color: string; children: React.ReactNode }) {
  return (
    <g transform={`translate(${at[0][0]} ${at[0][1]})`}>
      <path d={DROP} fill={color} stroke="#fff" strokeOpacity=".6" strokeWidth="1.2" />
      {children}
    </g>
  );
}

function Museum() {
  return (
    <g fill="#fff">
      <path d="M0-14 13-6V-4H-13V-6Z" />
      <path d="M-10-4H-7V9H-10ZM7-4H10V9H7ZM-13 9H13V12H-13Z" />
      <path d="M-5 8V0L0 5 5 0V8" fill="none" stroke="#fff" strokeWidth="2" />
    </g>
  );
}

function Marker({ at, fill, dark }: { at: Pt[]; fill: string; dark: string }) {
  return (
    <g transform={`translate(${at[0][0]} ${at[0][1]})`}>
      <path d="M0 61C-4 38-34 26-34 0A34 34 0 1 1 34 0C34 26 4 38 0 61Z" fill={fill} stroke={dark} strokeWidth="1.6" />
      <circle r="13" fill={dark} />
    </g>
  );
}

function Roundel({ at, ring }: { at: Pt[]; ring: string }) {
  return (
    <g transform={`translate(${at[0][0]} ${at[0][1]})`}>
      <circle r="12" fill="#fff" />
      <circle r="8.4" fill="#fff" stroke={ring} strokeWidth="3.2" />
      <rect x="-12.5" y="-2.6" width="25" height="5.2" fill="#1c3f94" />
    </g>
  );
}

const ORANGE_RING = "#ef7b22";
const RED_RING = "#dc241f";

function MapDrawing() {
  return (
    <svg viewBox="1280 369 993 1844" preserveAspectRatio="none" className="h-[764px] w-[412px] font-['Roboto']" fill="none" strokeLinejoin="round">
      <rect x="1280" y="369" width="993" height="1844" fill="#e8eaed" />
      {COMMERCE.map((p, i) => <path key={i} d={poly(p)} fill="#fef1d3" fillOpacity=".85" />)}
      {HOSPITAL.map((p, i) => <path key={i} d={poly(p)} fill="#fce4e2" />)}
      <path d={MEWS} stroke="#fff" strokeWidth="1.5" strokeOpacity=".6" />
      {PARKS.map((p, i) => <path key={i} d={poly(p)} fill="#a9dbb8" />)}
      {VICTORIA.map((p, i) => <path key={i} d={poly(p)} fill="#b5e0c2" />)}
      {PARK_PATHS.map((p, i) => <path key={i} d={line(p)} stroke="#6dba86" strokeWidth="1.6" strokeOpacity=".8" />)}
      {WATER.map((p, i) => <path key={i} d={poly(p)} fill="#9cc0f9" />)}
      {CANALS.map((c, i) => <path key={i} d={line(c.p)} stroke="#8fb8f6" strokeWidth={c.w} />)}
      {[
        "72,940 150,985 250,1040 350,1078 450,1092 580,1072 680,1010 780,890 870,790 960,690 1040,610 1120,565 1270,543 1390,570 1487,617",
        "72,970 150,1020 250,1070 370,1110 470,1120 600,1105 700,1045 800,930 910,805 1000,710 1080,640 1180,605 1270,595 1370,608 1487,662",
      ].map((s) => <path key={s} d={line(S(s))} stroke="#709ff0" strokeWidth="1.8" strokeDasharray="12 6" />)}
      {MINOR.map((p, i) => <path key={i} d={line(p)} stroke="#fff" strokeWidth="3.6" />)}
      {RAIL.map((r, i) => <path key={i} d={line(r.p)} stroke="#cfd1d4" strokeWidth={r.w} />)}
      {MAJOR.map((r, i) => <path key={i} d={line(r.p)} stroke="#fff" strokeWidth={r.w} strokeLinecap="round" />)}
      <path d={line(S("1487,330 1430,312 1390,312 1320,345"))} stroke="#d3d5d8" strokeWidth="11" />
      <path d={line(S("1010,465 960,500 935,590 925,750 915,920 895,1030 870,1120 820,1170"))} stroke="#dcdddf" strokeWidth="10" />
      {HIGHWAYS.map((h, i) => <path key={i} d={line(h.p)} stroke="#f5b544" strokeWidth={h.w + 3} />)}
      <path d={line(A11)} stroke="#f5b73f" strokeWidth="14" />
      {HIGHWAYS.map((h, i) => <path key={i} d={line(h.p)} stroke="#fdd878" strokeWidth={h.w} />)}
      <path d={line(A11)} stroke="#fde08b" strokeWidth="11" />
      <path d={line(A11)} stroke="#f5b73f" strokeWidth="1.8" />

      <Roundel at={N("581,1443")} ring={ORANGE_RING} />
      <Roundel at={M("490,708")} ring={ORANGE_RING} />
      <Roundel at={M("650,412")} ring={RED_RING} />
      <Roundel at={M("1004,912")} ring={RED_RING} />
      <Roundel at={M("472,1140")} ring="#6950a1" />
      <Roundel at={S("592,360")} ring={ORANGE_RING} />
      <Roundel at={S("628,898")} ring={ORANGE_RING} />
      <Roundel at={S("792,1182")} ring={ORANGE_RING} />
      <g transform={`translate(${S("1283,255")[0].join(" ")})`}>
        <rect x="-14" y="-12" width="28" height="24" rx="8" fill="#fff" />
        <path d="M-12-2.4H12M-12 3H12M-7-8 6-2.4-6 3 7 8.5" stroke="#e0313a" strokeWidth="2.6" />
      </g>

      {LABELS.map((l, i) => <MapLabel key={i} l={l} />)}

      <path id="thames-label" d={line(S("975,712 1030,655 1100,612 1186,585"))} />
      <text fontSize="27" fill="#3a70c8">
        <textPath href="#thames-label" textLength="168" lengthAdjust="spacingAndGlyphs">River Thames</textPath>
      </text>

      <Poi at={N("568,1098")} color="#12b5cb"><Museum /></Poi>
      <Poi at={M("656,160")} color="#12b5cb"><Museum /></Poi>
      <Poi at={M("828,888")} color="#12b5cb">
        <path d="M-11-12H11V13H-11Z" fill="#fff" />
        <path d="M-7.5-12V13M7.5-12V13" stroke="#12b5cb" strokeWidth="2.6" strokeDasharray="3 2.6" />
      </Poi>
      <Poi at={M("330,1250")} color="#f29900">
        <path d="M-10-13V-5Q-10-1-6-1T-2-5V-13M-6-13V13" stroke="#fff" strokeWidth="2.8" />
        <path d="M4 13V-10Q6-14 10-13V13Z" fill="#fff" />
      </Poi>
      <Poi at={M("1140,1260")} color="#78909c"><circle r="9" fill="#fff" /></Poi>
      <Poi at={M("1280,275")} color="#34a853"><circle r="9" fill="#fff" /></Poi>
      <Poi at={M("1255,612")} color="#78909c"><path d="M0-11 16-2 0 7-16-2ZM-9 4V9Q0 15 9 9V4L0 9Z" fill="#fff" /></Poi>

      <Marker at={M("754,510")} fill="#ea4335" dark="#b31412" />
      <Marker at={M("1303,632")} fill="#ea4335" dark="#b31412" />
      <Marker at={M("249,1190")} fill="#ea4335" dark="#b31412" />
      <Marker at={M("1065,846")} fill="#3535ea" dark="#1414b3" />

      <text x="1296" y="2183" fontSize="42" fontWeight="500" fontFamily="Lato" textLength="131" lengthAdjust="spacingAndGlyphs" stroke="#fff" strokeWidth="5" paintOrder="stroke">
        <tspan fill="#4285f4">G</tspan>
        <tspan fill="#ea4335">o</tspan>
        <tspan fill="#fbbc04">o</tspan>
        <tspan fill="#4285f4">g</tspan>
        <tspan fill="#34a853">l</tspan>
        <tspan fill="#ea4335">e</tspan>
      </text>
    </svg>
  );
}

function MapScreen() {
  return (
    <div className="relative h-[764px] w-[412px] overflow-hidden">
      <MapDrawing />
      <div className="absolute right-[18.9px] bottom-[19.1px] flex size-[67px] items-center justify-center rounded-[20px] bg-[#549fc9] shadow-[0_4px_8px_rgba(0,0,0,0.3)]">
        <MdMyLocation className="size-[36px] text-white" />
      </div>
    </div>
  );
}

/* ---------- page ---------- */

export default function App() {
  return (
    <div className="flex h-[2304px] w-[4096px] items-start overflow-hidden bg-white font-['Liberation_Serif',serif] [text-rendering:geometricPrecision]">
      <div className="mt-[328.8px] ml-[267px] shrink-0">
        <div className="[clip-path:inset(0_-8px_3.7px_0)] [zoom:1.7793]">
          <Phone time="11:29" signal="low" worn><AddSpace /></Phone>
        </div>
      </div>
      <div className="mt-[123.9px] ml-[101.4px] shrink-0">
        <div className="[zoom:2.2138]">
          <Phone time="11:24" signal="full"><MapScreen /></Phone>
        </div>
      </div>
      <div className="mt-[265.8px] ml-[103.2px] shrink-0">
        <div className="[clip-path:inset(2px_-8px_-2px_0)] [zoom:1.8932]">
          <Phone time="11:26" signal="most"><Locations /></Phone>
        </div>
      </div>
      <div className="mt-[379px] ml-[103.5px] shrink-0">
        <div className="[clip-path:inset(8px_-8px_-2px_0)] [zoom:1.6755]">
          <Phone time="11:33" signal="full"><MosqueDetails /></Phone>
        </div>
      </div>
    </div>
  );
}
